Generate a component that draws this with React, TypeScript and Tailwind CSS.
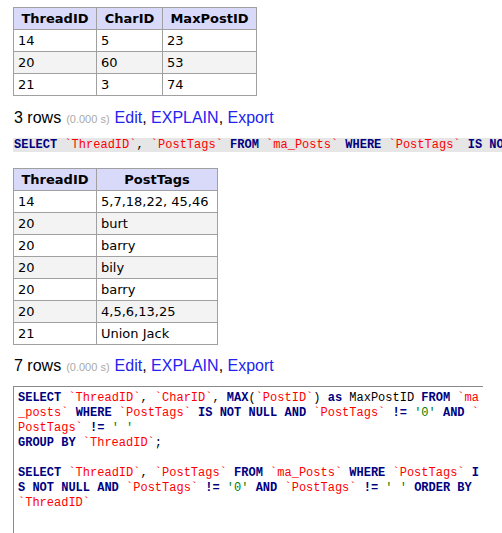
import React from 'react';

const K = ({ children }: { children: React.ReactNode }) => (
  <span className="font-bold text-[#000080]">{children}</span>
);
const Q = ({ children }: { children: React.ReactNode }) => (
  <span className="text-[#ff0000]">{children}</span>
);
const S = ({ children }: { children: React.ReactNode }) => (
  <span className="text-[#008000]">{children}</span>
);

function ResultTable({
  cols,
  widths,
  rows,
}: {
  cols: string[];
  widths: string[];
  rows: string[][];
}) {
  return (
    <table className="border-collapse table-fixed text-[13px] text-black [font-family:'DejaVu_Sans',Verdana,sans-serif]">
      <thead>
        <tr className="h-[22px]">
          {cols.map((c, i) => (
            <th
              key={c}
              className={`border border-[#a0a0a0] bg-[#d9d9fa] px-[5px] text-center font-bold ${widths[i]}`}
            >
              {c}
            </th>
          ))}
        </tr>
      </thead>
      <tbody>
        {rows.map((r, i) => (
          <tr key={i} className={`h-[22px] ${i % 2 === 1 ? 'bg-[#f3f3f3]' : 'bg-white'}`}>
            {r.map((v, j) => (
              <td key={j} className="border border-[#a0a0a0] px-[4px] text-left whitespace-nowrap">
                {v}
              </td>
            ))}
          </tr>
        ))}
      </tbody>
    </table>
  );
}

function RowsInfo({ count }: { count: number }) {
  return (
    <div className="flex items-baseline gap-[5px] pl-[14px] text-[16px] leading-[20px] [font-family:'Liberation_Sans',Arial,sans-serif]">
      <span className="text-black">{count} rows</span>
      <span className="text-[11px] text-[#aaaaaa]">(0.000 s)</span>
      <span>
        <span className="text-[#2323f0]">Edit</span>, <span className="text-[#2323f0]">EXPLAIN</span>,{' '}
        <span className="text-[#2323f0]">Export</span>
      </span>
    </div>
  );
}

export default function App() {
  return (
    <div className="min-h-[533px] w-[502px] overflow-hidden bg-white pt-[7px]">
      <div className="pl-[13px]">
        <ResultTable
          cols={['ThreadID', 'CharID', 'MaxPostID']}
          widths={['w-[83px]', 'w-[66px]', 'w-[94px]']}
          rows={[
            ['14', '5', '23'],
            ['20', '60', '53'],
            ['21', '3', '74'],
          ]}
        />
      </div>

      <div className="mt-[12px]">
        <RowsInfo count={3} />
      </div>

      <div className="mt-[9px] ml-[13px] h-[14px] overflow-hidden whitespace-pre bg-[#e6e6e6] pl-[1px] text-[12px] leading-[14px] [font-family:'Liberation_Mono','Courier_New',monospace]">
        <K>SELECT</K> <Q>`ThreadID`</Q>, <Q>`PostTags`</Q> <K>FROM</K> <Q>`ma_Posts`</Q> <K>WHERE</K>{' '}
        <Q>`PostTags`</Q> <K>IS NO</K>
      </div>

      <div className="mt-[16px] pl-[13px]">
        <ResultTable
          cols={['ThreadID', 'PostTags']}
          widths={['w-[83px]', 'w-[121px]']}
          rows={[
            ['14', '5,7,18,22, 45,46'],
            ['20', 'burt'],
            ['20', 'barry'],
            ['20', 'bily'],
            ['20', 'barry'],
            ['20', '4,5,6,13,25'],
            ['21', 'Union Jack'],
          ]}
        />
      </div>

      <div className="mt-[11px]">
        <RowsInfo count={7} />
      </div>

      <div className="ml-[13px] mt-[9px] h-[160px] w-[470px] border-l border-t border-[#8a8a8a] pl-[4px] pt-[4px] text-[12px] leading-[15px] text-black whitespace-pre [font-family:'Liberation_Mono','Courier_New',monospace]">
        <div>
          <K>SELECT</K> <Q>`ThreadID`</Q>, <Q>`CharID`</Q>, <K>MAX</K>(<Q>`PostID`</Q>) <K>as</K> MaxPostID{' '}
          <K>FROM</K> <Q>`ma</Q>
        </div>
        <div>
          <Q>_posts`</Q> <K>WHERE</K> <Q>`PostTags`</Q> <K>IS NOT NULL AND</K> <Q>`PostTags`</Q> <K>!=</K>{' '}
          <S>'0'</S> <K>AND</K> <Q>`</Q>
        </div>
        <div>
          <Q>PostTags`</Q> <K>!=</K> <S>' '</S>
        </div>
        <div>
          <K>GROUP BY</K> <Q>`ThreadID`</Q>;
        </div>
        <div>&nbsp;</div>
        <div>
          <K>SELECT</K> <Q>`ThreadID`</Q>, <Q>`PostTags`</Q> <K>FROM</K> <Q>`ma_Posts`</Q> <K>WHERE</K>{' '}
          <Q>`PostTags`</Q> <K>I</K>
        </div>
        <div>
          <K>S NOT NULL AND</K> <Q>`PostTags`</Q> <K>!=</K> <S>'0'</S> <K>AND</K> <Q>`PostTags`</Q> <K>!=</K>{' '}
          <S>' '</S> <K>ORDER BY</K>
        </div>
        <div>
          <Q>`ThreadID`</Q>
        </div>
      </div>
    </div>
  );
}
